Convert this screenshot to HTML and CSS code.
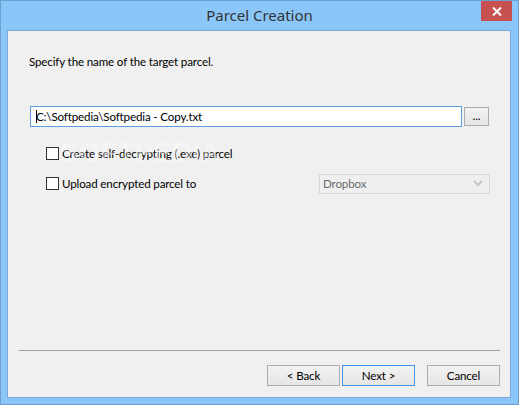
FILE: index.html
```html
<!DOCTYPE html>
<html lang="en">
<head>
    <meta charset="UTF-8">
    <title>Parcel Creation</title>
    <link rel="stylesheet" href="styles.css">
</head>
<body>
    <div class="window">
        <div class="titlebar">
            <div></div>
            <div class="title">Parcel Creation</div>
            <div class="close">
                <svg width="10" height="9" viewBox="0 0 10 9">
                    <path d="M1 0.5 L9 8.5 M9 0.5 L1 8.5" stroke="#fff" stroke-width="2"/>
                </svg>
            </div>
        </div>

        <div class="client">
            <div class="intro">Specify the name of the target parcel.</div>

            <div class="path-row">
                <div class="textbox"><span class="caret"></span>C:\Softpedia\Softpedia - Copy.txt</div>
                <div class="btn browse">...</div>
            </div>

            <div class="option first">
                <span class="check"></span>
                <span>Create self-decrypting (.exe) parcel</span>
            </div>
            <div class="option second">
                <span class="check"></span>
                <span>Upload encrypted parcel to</span>
                <div class="select">
                    <span>Dropbox</span>
                    <svg width="10" height="7" viewBox="0 0 10 7">
                        <path d="M1 1 L5 5 L9 1" stroke="#c4c4c4" stroke-width="2" fill="none"/>
                    </svg>
                </div>
            </div>

            <div class="watermark">SOFTPEDIA<sup>®</sup></div>

            <div class="footer">
                <div class="separator"></div>
                <div class="buttons">
                    <div class="btn">&lt; Back</div>
                    <div class="btn focus">Next &gt;</div>
                    <div class="btn cancel">Cancel</div>
                </div>
            </div>
        </div>
    </div>
</body>
</html>
```

FILE: styles.css
```css
body {
    margin: 0;
    padding: 0;
    font-family: 'Lato', sans-serif;
    font-size: 11.6px;
    letter-spacing: -0.15px;
    color: #000;
}

.window {
    width: 519px;
    height: 405px;
    box-sizing: border-box;
    border: 1px solid #6f9fd2;
    background: #8bc6f8;
    padding: 0 7px 6px 6px;
    display: flex;
    flex-direction: column;
}

.titlebar {
    height: 29px;
    display: grid;
    grid-template-columns: 1fr auto 1fr;
    margin: 0 -7px 0 -6px;
}
.title {
    font-family: 'Noto Sans', sans-serif;
    font-size: 15px;
    letter-spacing: 0;
    color: #333;
    line-height: 28px;
}
.close {
    justify-self: end;
    margin-right: 6px;
    width: 31px;
    height: 20px;
    background: #c75050;
    display: flex;
    align-items: center;
    justify-content: center;
}

.client {
    flex: 1;
    background: #f0f0f0;
    border: 1px solid #7aa7d8;
    display: flex;
    flex-direction: column;
    position: relative;
}

.intro {
    margin: 23px 0 0 21px;
    line-height: 16px;
}

.path-row {
    display: flex;
    align-items: center;
    margin: 36px 0 0 22px;
    gap: 2px;
}
.textbox {
    width: 432px;
    height: 21px;
    box-sizing: border-box;
    border: 1px solid #5a9ee0;
    background: #fff;
    padding-left: 5px;
    line-height: 19px;
    white-space: nowrap;
    display: flex;
    align-items: center;
}
.caret {
    width: 1px;
    height: 13px;
    background: #000;
    margin-right: -1px;
}

.btn {
    width: 73px;
    height: 21px;
    box-sizing: border-box;
    border: 1px solid #adadad;
    background: linear-gradient(#f2f2f2, #e6e6e6);
    text-align: center;
    line-height: 19px;
}
.btn.browse {
    width: 25px;
    height: 19px;
    line-height: 15px;
}
.btn.focus {
    border-color: #3c95e6;
}

.option {
    display: flex;
    align-items: center;
    margin-left: 38px;
    gap: 3px;
    height: 13px;
}
.option.first {
    margin-top: 20px;
}
.option.second {
    margin-top: 17px;
}
.check {
    width: 13px;
    height: 13px;
    box-sizing: border-box;
    border: 1px solid #333;
    background: #fff;
}
.select {
    margin-left: auto;
    margin-right: 20px;
    width: 171px;
    height: 20px;
    box-sizing: border-box;
    border: 1px solid #d9d9d9;
    background: #efefef;
    color: #6d6d6d;
    display: flex;
    align-items: center;
    justify-content: space-between;
    padding: 0 6px 0 3px;
}

.watermark {
    position: absolute;
    left: 52px;
    top: 106px;
    font-family: 'Liberation Sans', sans-serif;
    font-weight: bold;
    font-size: 28px;
    letter-spacing: 0;
    color: rgba(255, 255, 255, 0.4);
    pointer-events: none;
}
.watermark sup {
    font-size: 8px;
    font-weight: normal;
}

.footer {
    margin-top: auto;
    padding: 0 10px 11px 11px;
}
.separator {
    height: 1px;
    background: #a0a0a0;
    margin-bottom: 14px;
}
.buttons {
    display: flex;
    justify-content: flex-end;
    gap: 2px;
}
.btn.cancel {
    margin-left: 10px;
}
```
